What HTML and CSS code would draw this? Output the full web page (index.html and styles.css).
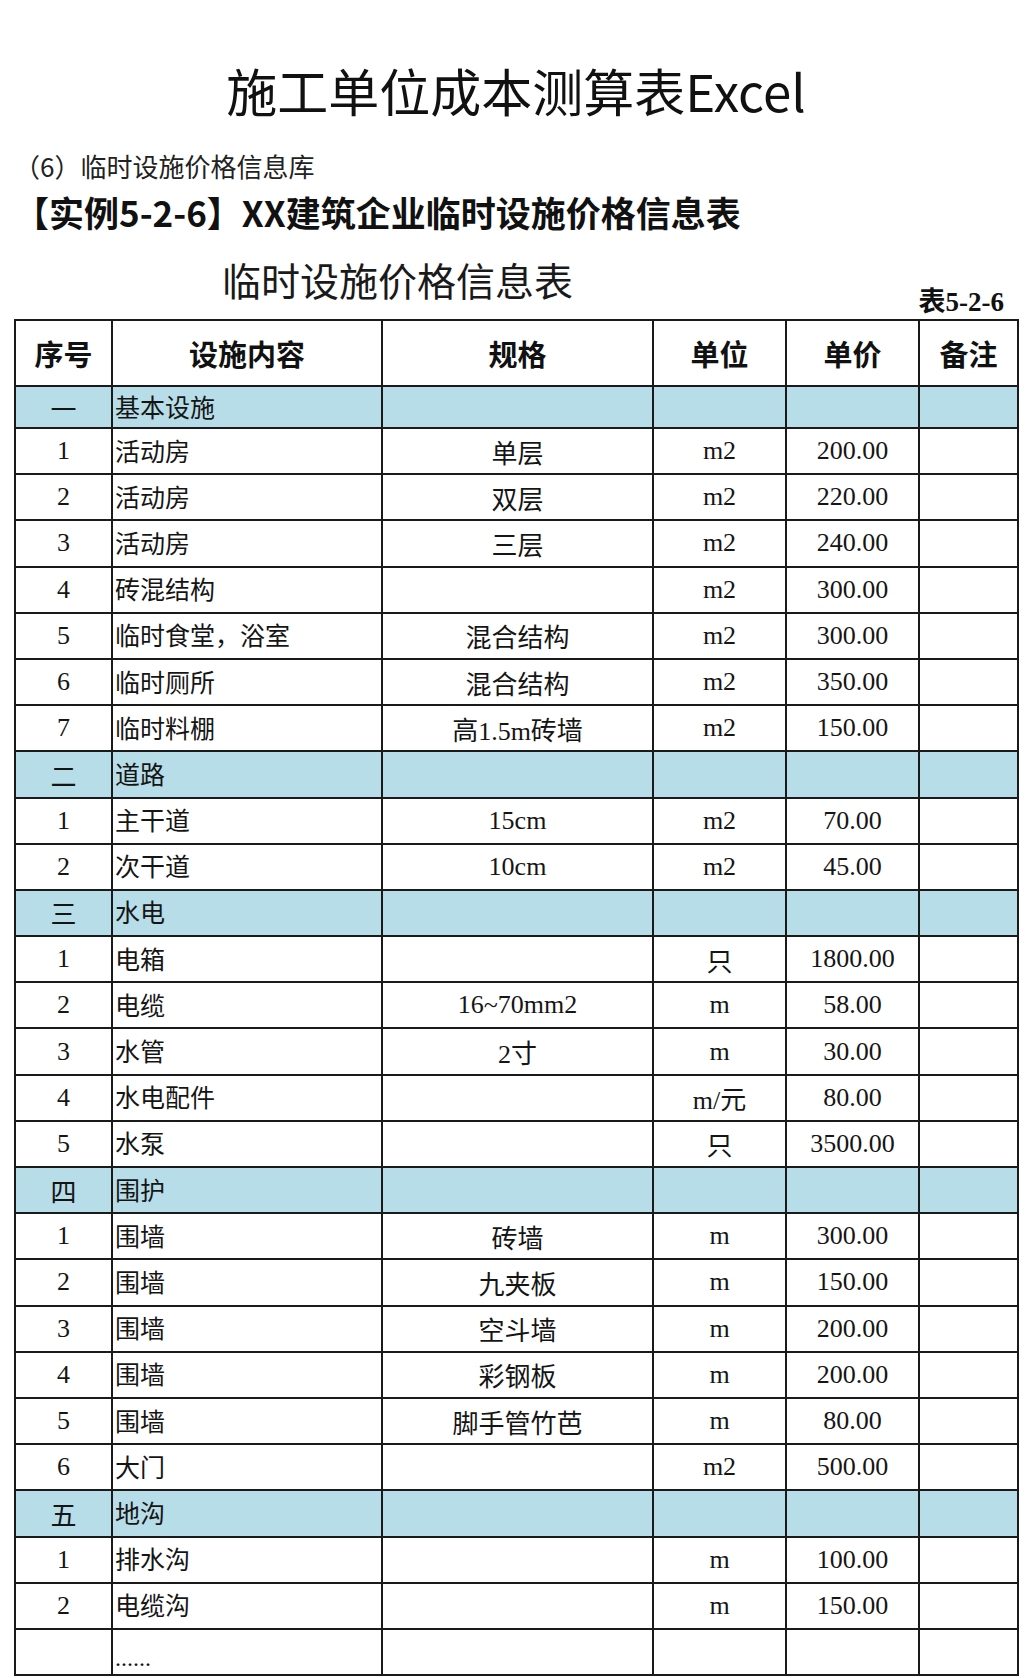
FILE: index.html
```html
<!DOCTYPE html>
<html lang="zh-CN">
<head>
<meta charset="utf-8">
<title>施工单位成本测算表Excel</title>
<link rel="stylesheet" href="styles.css">
</head>
<body>
<div class="page">
  <h1 class="main-title">施工单位成本测算表Excel</h1>
  <p class="subtitle">（6）临时设施价格信息库</p>
  <h2 class="example">【实例5-2-6】XX建筑企业临时设施价格信息表</h2>
  <div class="caption-row">
    <div class="table-title">临时设施价格信息表</div>
    <div class="table-no">表5-2-6</div>
  </div>
  <table class="price">
    <colgroup>
      <col class="c1"><col class="c2"><col class="c3"><col class="c4"><col class="c5"><col class="c6">
    </colgroup>
    <thead>
      <tr class="head"><th>序号</th><th>设施内容</th><th>规格</th><th>单位</th><th>单价</th><th>备注</th></tr>
    </thead>
    <tbody>
      <tr class="sec first"><td>一</td><td class="name">基本设施</td><td></td><td></td><td></td><td></td></tr>
      <tr><td>1</td><td class="name">活动房</td><td>单层</td><td>m2</td><td>200.00</td><td></td></tr>
      <tr><td>2</td><td class="name">活动房</td><td>双层</td><td>m2</td><td>220.00</td><td></td></tr>
      <tr><td>3</td><td class="name">活动房</td><td>三层</td><td>m2</td><td>240.00</td><td></td></tr>
      <tr><td>4</td><td class="name">砖混结构</td><td></td><td>m2</td><td>300.00</td><td></td></tr>
      <tr><td>5</td><td class="name">临时食堂，浴室</td><td>混合结构</td><td>m2</td><td>300.00</td><td></td></tr>
      <tr><td>6</td><td class="name">临时厕所</td><td>混合结构</td><td>m2</td><td>350.00</td><td></td></tr>
      <tr><td>7</td><td class="name">临时料棚</td><td>高1.5m砖墙</td><td>m2</td><td>150.00</td><td></td></tr>
      <tr class="sec"><td>二</td><td class="name">道路</td><td></td><td></td><td></td><td></td></tr>
      <tr><td>1</td><td class="name">主干道</td><td>15cm</td><td>m2</td><td>70.00</td><td></td></tr>
      <tr><td>2</td><td class="name">次干道</td><td>10cm</td><td>m2</td><td>45.00</td><td></td></tr>
      <tr class="sec"><td>三</td><td class="name">水电</td><td></td><td></td><td></td><td></td></tr>
      <tr><td>1</td><td class="name">电箱</td><td></td><td>只</td><td>1800.00</td><td></td></tr>
      <tr><td>2</td><td class="name">电缆</td><td>16~70mm2</td><td>m</td><td>58.00</td><td></td></tr>
      <tr><td>3</td><td class="name">水管</td><td>2寸</td><td>m</td><td>30.00</td><td></td></tr>
      <tr><td>4</td><td class="name">水电配件</td><td></td><td>m/元</td><td>80.00</td><td></td></tr>
      <tr><td>5</td><td class="name">水泵</td><td></td><td>只</td><td>3500.00</td><td></td></tr>
      <tr class="sec"><td>四</td><td class="name">围护</td><td></td><td></td><td></td><td></td></tr>
      <tr><td>1</td><td class="name">围墙</td><td>砖墙</td><td>m</td><td>300.00</td><td></td></tr>
      <tr><td>2</td><td class="name">围墙</td><td>九夹板</td><td>m</td><td>150.00</td><td></td></tr>
      <tr><td>3</td><td class="name">围墙</td><td>空斗墙</td><td>m</td><td>200.00</td><td></td></tr>
      <tr><td>4</td><td class="name">围墙</td><td>彩钢板</td><td>m</td><td>200.00</td><td></td></tr>
      <tr><td>5</td><td class="name">围墙</td><td>脚手管竹芭</td><td>m</td><td>80.00</td><td></td></tr>
      <tr><td>6</td><td class="name">大门</td><td></td><td>m2</td><td>500.00</td><td></td></tr>
      <tr class="sec"><td>五</td><td class="name">地沟</td><td></td><td></td><td></td><td></td></tr>
      <tr><td>1</td><td class="name">排水沟</td><td></td><td>m</td><td>100.00</td><td></td></tr>
      <tr><td>2</td><td class="name">电缆沟</td><td></td><td>m</td><td>150.00</td><td></td></tr>
      <tr class="last"><td></td><td class="name dots">......</td><td></td><td></td><td></td><td></td></tr>
    </tbody>
  </table>
</div>
</body>
</html>
```

FILE: styles.css
```css
html, body {
  margin: 0;
  padding: 0;
  background: #ffffff;
}

body {
  font-family: "Noto Sans CJK SC", "Noto Sans", sans-serif;
  color: #141414;
}

.page {
  width: 1004px;
  padding: 60px 15px 0 14px;
}

.main-title {
  margin: 0;
  font-weight: 400;
  font-size: 51px;
  line-height: 60px;
  text-align: center;
  color: #111;
}

.subtitle {
  margin: 31px 0 0 0;
  font-size: 26px;
  line-height: 30px;
  color: #222;
}

.example {
  margin: 11px 0 0 0;
  font-size: 35px;
  font-weight: 700;
  line-height: 40px;
  color: #111;
}

.caption-row {
  display: flex;
  justify-content: space-between;
  height: 62px;
  margin-top: 25px;
}

.table-title {
  align-self: flex-start;
  font-size: 39px;
  line-height: 44px;
  padding-left: 208px;
  color: #1a1a1a;
}

.table-no {
  align-self: flex-end;
  font-family: "Liberation Serif", "Noto Sans CJK SC", serif;
  font-weight: 700;
  font-size: 27px;
  line-height: 26px;
  margin-bottom: 4px;
  padding-right: 14px;
  color: #111;
}

.price {
  width: 1003px;
  border-collapse: collapse;
  table-layout: fixed;
  font-family: "Liberation Serif", "Noto Sans CJK SC", serif;
  font-size: 26px;
  color: #151515;
}

.c1 { width: 97px; }
.c2 { width: 270px; }
.c3 { width: 271px; }
.c4 { width: 133px; }
.c5 { width: 133px; }
.c6 { width: 99px; }

.price th,
.price td {
  border: 2px solid #1a1a1a;
  padding: 0;
  text-align: center;
  vertical-align: middle;
  white-space: nowrap;
  overflow: hidden;
}

.price tr {
  height: 46.2px;
}

.price tr.head {
  height: 66px;
}

.price th {
  font-family: "Noto Sans CJK SC", sans-serif;
  font-weight: 700;
  font-size: 29px;
  padding: 0;
  color: #111;
}

.price tr.sec {
  background: #b7dde8;
}

.price tr.sec.first {
  height: 42px;
}

.price td.name {
  text-align: left;
  padding: 0 0 3px 2px;
  font-size: 25px;
}

.price td.dots {
  vertical-align: bottom;
  font-size: 24px;
  line-height: 20px;
  padding-bottom: 6px;
}
```
